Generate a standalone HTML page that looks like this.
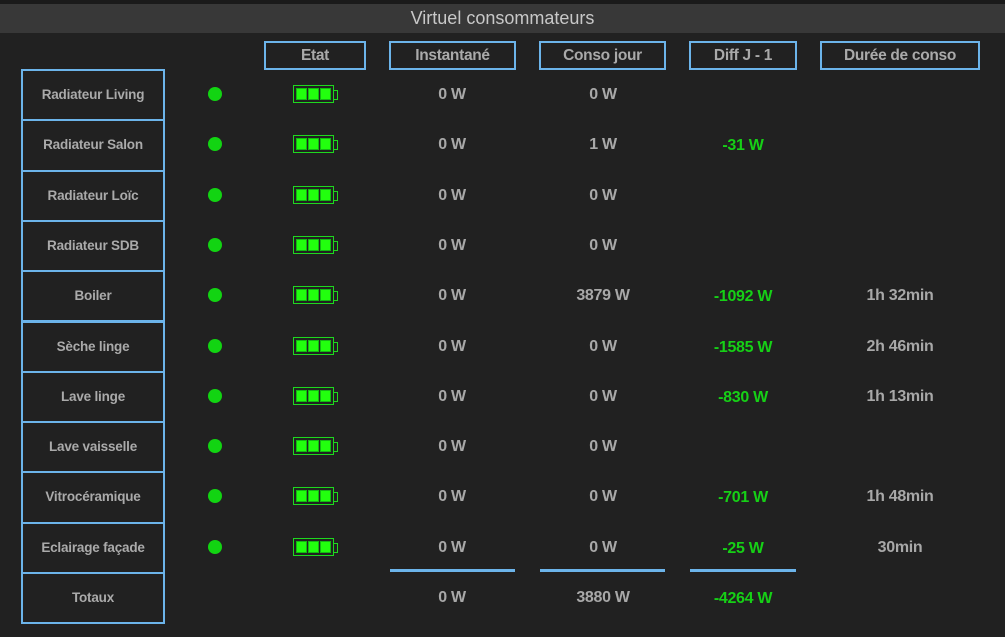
<!DOCTYPE html>
<html><head><meta charset="utf-8"><style>
*{margin:0;padding:0;box-sizing:border-box}
body{width:1005px;height:637px;background:#212121;font-family:"Liberation Sans",sans-serif;position:relative;overflow:hidden}
.top{position:absolute;left:0;top:0;width:1005px;height:4px;background:#1a1a1a}
.title{position:absolute;left:0;top:4px;width:1005px;height:29px;background:#383838;color:#c8c8c8;font-size:18px;text-align:center;line-height:29px}
.hb{position:absolute;top:41px;height:29px;border:2px solid #6cb4ea;color:#aaa;font-weight:bold;font-size:15.5px;text-align:center;line-height:25px;letter-spacing:-0.3px}
.lb{position:absolute;left:21px;width:144px;border:2px solid #6cb4ea;color:#aaa;font-weight:bold;font-size:13.5px;text-align:center;letter-spacing:-0.2px}
.v{position:absolute;width:160px;text-align:center;font-weight:bold;font-size:16px;color:#a8a8a8;letter-spacing:-0.3px}
.g{color:#16d016}
.dot{position:absolute;left:208px;width:14px;height:14px;border-radius:50%;background:#12d412}
.bat{position:absolute;left:293px;width:41px;height:18px;border:1px solid #1ed81e;padding:2px;display:flex;gap:1px}
.bat i{flex:1;background:#22ff0e;border:1px solid #14b814}
.bat:after{content:"";position:absolute;right:-5px;top:4px;width:4px;height:8px;border:1px solid #1ed81e;border-left:none}
.ul{position:absolute;top:569px;height:3px;background:#6cb4ea}
</style></head><body>
<div class="top"></div>
<div class="title">Virtuel consommateurs</div>
<div class="hb" style="left:264px;width:102px">Etat</div>
<div class="hb" style="left:389px;width:127px">Instantané</div>
<div class="hb" style="left:539px;width:127px">Conso jour</div>
<div class="hb" style="left:689px;width:108px">Diff J - 1</div>
<div class="hb" style="left:820px;width:160px">Durée de conso</div>
<div id="rows"></div>
<script>
var d=[["Radiateur Living","0 W","0 W","",""],["Radiateur Salon","0 W","1 W","-31 W",""],["Radiateur Loïc","0 W","0 W","",""],["Radiateur SDB","0 W","0 W","",""],["Boiler","0 W","3879 W","-1092 W","1h 32min"],["Sèche linge","0 W","0 W","-1585 W","2h 46min"],["Lave linge","0 W","0 W","-830 W","1h 13min"],["Lave vaisselle","0 W","0 W","",""],["Vitrocéramique","0 W","0 W","-701 W","1h 48min"],["Eclairage façade","0 W","0 W","-25 W","30min"],["Totaux","0 W","3880 W","-4264 W",""]];
var h="";
for(var i=0;i<11;i++){var t=69+i*50.3,c=t+25;var r=d[i];
h+='<div class="lb" style="top:'+t+'px;height:'+(i==10?52:52.3)+'px;line-height:'+47+'px">'+r[0]+'</div>';
if(i<10){h+='<div class="dot" style="top:'+(c-7)+'px"></div><div class="bat" style="top:'+(c-9)+'px"><i></i><i></i><i></i></div>';}
var y=c-8;
h+='<div class="v" style="left:372px;top:'+y+'px">'+r[1]+'</div>';
h+='<div class="v" style="left:523px;top:'+y+'px">'+r[2]+'</div>';
h+='<div class="v g" style="left:663px;top:'+(y+1)+'px">'+r[3]+'</div>';
h+='<div class="v" style="left:820px;top:'+y+'px">'+r[4]+'</div>';}
document.getElementById("rows").innerHTML=h;
</script>
<div class="ul" style="left:390px;width:125px"></div>
<div class="ul" style="left:540px;width:125px"></div>
<div class="ul" style="left:690px;width:106px"></div>
</body></html>
